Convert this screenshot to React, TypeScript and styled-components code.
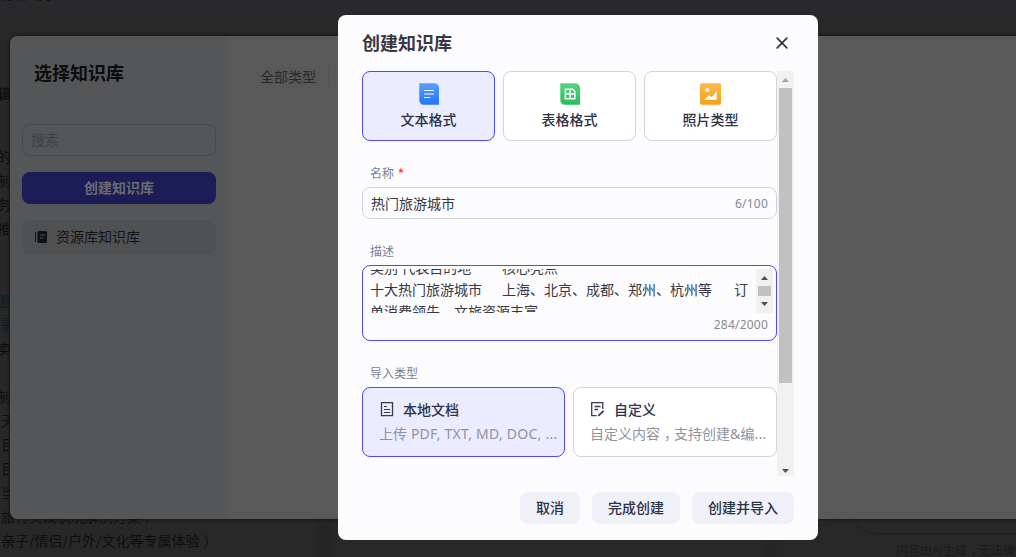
import React from "react";
import styled, { createGlobalStyle, css } from "styled-components";

const Global = createGlobalStyle`
  * { box-sizing: border-box; }
  html, body { margin: 0; height: 557px; overflow: hidden; background: #292929; }
  body { font-family: "Noto Sans CJK SC", sans-serif; font-size: 14px; color: #383743; }
`;

const Page = styled.div`
  position: relative;
  width: 1016px;
  height: 557px;
  overflow: hidden;
  background: #282828;
`;
const TopBar = styled.header`
  display: flex;
  height: 21px;
  padding-left: 1px;
  background: #29292b;
  border-bottom: 1px solid #252527;
  color: #101012;
  font-size: 14px;
  line-height: 20px;
`;
const TopText = styled.span`
  margin-top: -17px;
  width: 100px;
  white-space: nowrap;
`;
const TopPill = styled.span`
  width: 203px;
  height: 5px;
  border: 1px solid #252527;
  border-top: 0;
  border-radius: 0 0 6px 6px;
`;
const Prompt = styled.div`
  padding-top: 60px;
  width: 315px;
  line-height: 24px;
  color: #0e0e0e;
`;
const PromptLine = styled.div<{ $shift?: number; $tone?: string; $bold?: boolean }>`
  height: 24px;
  white-space: nowrap;
  text-indent: ${(p) => p.$shift ?? 1}px;
  color: ${(p) => p.$tone ?? "#0e0e0e"};
  font-weight: ${(p) => (p.$bold ? 700 : 400)};
`;
const PromptGap = styled.div<{ $h: number }>`
  height: ${(p) => p.$h}px;
`;
const Punct = styled.span`
  margin: 0 -4px 0 4px;
`;
const Splitter = styled.div`
  position: absolute;
  left: 315px;
  top: 519px;
  width: 17px;
  height: 38px;
  background: #252525;
`;
const ChatSplitter = styled(Splitter)`
  left: 766px;
  background: #262626;
`;
const ChatBox = styled.div`
  position: absolute;
  left: 852px;
  top: 480px;
  width: 240px;
  height: 54px;
  border: 1px solid #202022;
  border-radius: 24px;
`;
const ChatButton = styled(ChatBox)`
  left: 804px;
  top: 486px;
  width: 40px;
  height: 40px;
`;
const Disclaimer = styled.div`
  position: absolute;
  left: 896px;
  top: 541px;
  font-size: 12px;
  line-height: 18px;
  white-space: nowrap;
  color: #191a1d;
`;

const Picker = styled.section`
  position: absolute;
  left: 10px;
  top: 36px;
  width: 1030px;
  height: 483px;
  display: flex;
  overflow: hidden;
  border-radius: 8px;
  background: #595959;
  box-shadow: 0 0 3px 1px #161616;
`;
const Sidebar = styled.aside`
  width: 218px;
  padding: 23px 12px;
  background: #555658;
`;
const PickerTitle = styled.h2`
  margin: 0 0 39px;
  padding-left: 12px;
  font-size: 18px;
  line-height: 26px;
  font-weight: 700;
  color: #0b0c0e;
`;
const SearchBox = styled.div`
  height: 32px;
  margin-bottom: 16px;
  padding-left: 8px;
  border: 1px solid #48494d;
  border-radius: 8px;
  line-height: 29px;
  color: #3f4045;
`;
const CreateButton = styled.div`
  height: 32px;
  margin-bottom: 16px;
  border-radius: 8px;
  background: #1c1c56;
  color: #6b6b70;
  font-weight: 700;
  line-height: 31px;
  text-align: center;
`;
const LibraryItem = styled.div`
  display: flex;
  align-items: center;
  gap: 8px;
  height: 34px;
  padding-left: 12px;
  border-radius: 8px;
  background: #505153;
  color: #131417;
`;
const LibraryName = styled.span`
  margin-bottom: 2px;
`;
const PickerMain = styled.div`
  display: flex;
  align-items: flex-start;
  padding: 30px 0 0 32px;
  color: #28292d;
`;
const Filter = styled.div`
  width: 69px;
  height: 20px;
  line-height: 20px;
  border-right: 1px solid #535355;
`;

const Modal = styled.section`
  position: absolute;
  left: 338px;
  top: 15px;
  width: 480px;
  height: 525px;
  padding: 0 24px 16px;
  display: flex;
  flex-direction: column;
  border-radius: 8px;
  background: #fcfcff;
`;
const ModalHeader = styled.header`
  display: flex;
  flex: none;
  align-items: center;
  justify-content: space-between;
  height: 56px;
  padding-right: 5px;
`;
const ModalTitle = styled.h1`
  margin: 0 0 2px;
  font-size: 18px;
  line-height: 26px;
  font-weight: 700;
  color: #383743;
`;
const ScrollArea = styled.div`
  display: flex;
  flex: none;
  height: 405px;
`;
const Form = styled.div`
  width: 415px;
`;
const Cards = styled.div`
  display: flex;
  gap: 8px;
`;
const cardFrame = css<{ $active?: boolean }>`
  height: 70px;
  border: 1px solid ${(p) => (p.$active ? "#5147ff" : "#d2d3e0")};
  border-radius: 8px;
  background: ${(p) => (p.$active ? "#ebecff" : "#ffffff")};
`;
const FormatCard = styled.div<{ $active?: boolean }>`
  ${cardFrame}
  flex: 1 1 0;
  min-width: 0;
  display: flex;
  flex-direction: column;
  align-items: center;
  padding-top: 10px;
  gap: 2px;
  font-weight: 500;
  line-height: 22px;
  color: #2e3247;
`;
const ImportCard = styled.div<{ $active?: boolean; $w: number }>`
  ${cardFrame}
  flex: none;
  width: ${(p) => p.$w}px;
  padding: 10px 4px 0 16px;
`;
const ImportTitle = styled.div`
  display: flex;
  align-items: center;
  gap: 8px;
  height: 22px;
  font-weight: 500;
  color: #2e3247;
`;
const ImportText = styled.div`
  margin-top: 1px;
  height: 24px;
  line-height: 24px;
  white-space: nowrap;
  color: #92929c;
`;
const Latin = styled.span`
  font-family: "Noto Sans", sans-serif;
  line-height: 1;
  letter-spacing: 0.24px;
`;
const Label = styled.div`
  height: 46px;
  padding: 23px 8px 0;
  font-size: 12px;
  line-height: 17px;
  color: #7b7e93;
`;
const Required = styled.span`
  margin-left: 4px;
  font-weight: 700;
  color: #ff441e;
`;
const NameInput = styled.div`
  display: flex;
  align-items: center;
  justify-content: space-between;
  height: 32px;
  padding: 0 8px;
  border: 1px solid #d2d3e0;
  border-radius: 8px;
  color: #383743;
`;
const Counter = styled.span`
  font-family: "Noto Sans", sans-serif;
  font-size: 12px;
  line-height: 16px;
  letter-spacing: 0.22px;
  color: #878894;
`;
const NameCounter = styled(Counter)`
  margin-top: 2px;
`;
const DescriptionBox = styled.div`
  height: 76px;
  padding: 3px 3px 0 7px;
  border: 1px solid #5147ff;
  border-radius: 8px;
`;
const DescriptionView = styled.div`
  display: flex;
  justify-content: space-between;
  height: 44px;
  overflow: hidden;
`;
const DescriptionText = styled.div`
  margin-top: -13px;
  line-height: 22px;
  white-space: pre;
  color: #383743;
`;
const Cell = styled.span<{ $w: number }>`
  display: inline-block;
  width: ${(p) => p.$w}px;
`;
const DescriptionCount = styled.div`
  padding: 2px 5px 0 0;
  line-height: 16px;
  text-align: right;
`;
const Track = styled.div<{ $h: number }>`
  display: flex;
  flex: none;
  flex-direction: column;
  align-items: center;
  width: 17px;
  height: ${(p) => p.$h}px;
  background: #f1f1f1;
`;
const Arrow = styled.svg`
  display: block;
  flex: none;
  width: 17px;
  height: 17px;
`;
const Thumb = styled.div<{ $h: number }>`
  width: 13px;
  height: ${(p) => p.$h}px;
  margin-bottom: auto;
  background: #c1c1c1;
`;
const Footer = styled.footer`
  display: flex;
  justify-content: flex-end;
  gap: 12px;
  margin-top: auto;
`;
const Button = styled.div`
  height: 32px;
  padding: 0 16px;
  border-radius: 8px;
  background: #f0f0f8;
  color: #2e3247;
  font-weight: 500;
  line-height: 31px;
`;

interface ScrollbarProps {
  height: number;
  thumb: number;
  topColor?: string;
  downY?: number;
}

function Scrollbar({ height, thumb, topColor = "#505050", downY = 10 }: ScrollbarProps) {
  return (
    <Track $h={height}>
      <Arrow viewBox="0 0 17 17"><path d="M5 11l3.5-4 3.5 4z" fill={topColor} /></Arrow>
      <Thumb $h={thumb} />
      <Arrow viewBox="0 0 17 17"><path d={`M5 ${downY}h7l-3.5 4z`} fill="#505050" /></Arrow>
    </Track>
  );
}

const TextIcon = () => (
  <svg width="24" height="24" viewBox="0 0 24 24">
    <defs><linearGradient id="blue" x2="0" y2="1"><stop stopColor="#5a9fff" /><stop offset="1" stopColor="#2276fb" /></linearGradient></defs>
    <path d="M2.3 1.2h15.2a4.5 4.5 0 0 1 4.5 4.5v17H6.8a4.5 4.5 0 0 1-4.5-4.5z" fill="url(#blue)" />
    <path d="M7 8.5h10M7 12h10M7 15.5h6" stroke="#fff" strokeWidth="1.2" />
  </svg>
);
const TableIcon = () => (
  <svg width="24" height="24" viewBox="0 0 24 24">
    <defs><linearGradient id="green" x2="0" y2="1"><stop stopColor="#5ad37f" /><stop offset="1" stopColor="#27bd59" /></linearGradient></defs>
    <path d="M2.3 1.2h15.2a4.5 4.5 0 0 1 4.5 4.5v17H6.8a4.5 4.5 0 0 1-4.5-4.5z" fill="url(#green)" />
    <path d="M7.4 7.2h7.4l2 2v7.6H7.4zM12.1 7.2v9.6M7.4 12h9.4" fill="none" stroke="#fff" strokeWidth="1.5" />
  </svg>
);
const PhotoIcon = () => (
  <svg width="24" height="24" viewBox="0 0 24 24">
    <defs><linearGradient id="amber" x2="0" y2="1"><stop stopColor="#ffb94b" /><stop offset="1" stopColor="#f7a014" /></linearGradient></defs>
    <rect x="1" y="1.2" width="21" height="21.5" rx="1.6" fill="url(#amber)" />
    <circle cx="8.5" cy="8" r="2" fill="#fff" />
    <path d="M5.2 17.8l4.6-4.6 3 2 5-6.2v8.8z" fill="#fff" />
  </svg>
);
const DocIcon = () => (
  <svg width="16" height="16" viewBox="0 0 16 16" fill="none" stroke="#383b50" strokeWidth="1.3">
    <path d="M2.5 1.7h11v13h-11z" />
    <path d="M5 5.5h3M5 8.5h6M5 11.5h6" strokeWidth="1.1" />
  </svg>
);
const EditIcon = () => (
  <svg width="16" height="16" viewBox="0 0 16 16" fill="none" stroke="#383b50" strokeWidth="1.3">
    <path d="M6.5 14.7H1.7v-13h11.1V8M4.5 5.5h6M4.5 8.5h3.5" />
    <path d="M8.2 14.9l5.4-5" strokeWidth="1.9" />
  </svg>
);
const LibraryIcon = () => (
  <svg width="14" height="14" viewBox="0 0 14 14">
    <path d="M1.5 2v10" stroke="#111216" strokeWidth="1" />
    <rect x="3.5" y="1" width="9.5" height="12" rx="1.5" fill="#111216" />
    <path d="M6 5h5M6 8h3.5" stroke="#505153" strokeWidth="1.2" />
  </svg>
);
const CloseIcon = () => (
  <svg width="14" height="14" viewBox="0 0 14 14" stroke="#383743" strokeWidth="1.8" strokeLinecap="round">
    <path d="M2.2 2.2l9.6 9.6M11.8 2.2l-9.6 9.6" />
  </svg>
);

export default function App() {
  return (
    <Page>
      <Global />
      <TopBar>
        <TopText>分析助手</TopText>
        <TopPill />
      </TopBar>
      <Prompt>
        <PromptLine $shift={-3} $bold>辑</PromptLine>
        <PromptGap $h={39} />
        <PromptLine $shift={-3}>的</PromptLine>
        <PromptLine $shift={-3}>制</PromptLine>
        <PromptLine $shift={-3}>务</PromptLine>
        <PromptLine $shift={-3}>推</PromptLine>
        <PromptGap $h={48} />
        <PromptLine $shift={-3} $tone="#0d1c1f">游</PromptLine>
        <PromptLine $tone="#0d1c1f">需</PromptLine>
        <PromptLine $shift={-3}>卖</PromptLine>
        <PromptGap $h={24} />
        <PromptLine $shift={-3}>制</PromptLine>
        <PromptLine>天</PromptLine>
        <PromptLine>目</PromptLine>
        <PromptLine>目</PromptLine>
        <PromptLine>当</PromptLine>
        <PromptLine>旅行突发状况解决方案<Punct>）</Punct></PromptLine>
        <PromptLine>亲子/情侣/户外/文化等专属体验<Punct>）</Punct></PromptLine>
      </Prompt>
      <Splitter />
      <ChatSplitter />
      <ChatBox />
      <ChatButton />
      <Disclaimer>内容由AI生成<Punct>，</Punct>无法确保</Disclaimer>

      <Picker>
        <Sidebar>
          <PickerTitle>选择知识库</PickerTitle>
          <SearchBox>搜索</SearchBox>
          <CreateButton>创建知识库</CreateButton>
          <LibraryItem><LibraryIcon /><LibraryName>资源库知识库</LibraryName></LibraryItem>
        </Sidebar>
        <PickerMain><Filter>全部类型</Filter></PickerMain>
      </Picker>

      <Modal>
        <ModalHeader>
          <ModalTitle>创建知识库</ModalTitle>
          <CloseIcon />
        </ModalHeader>
        <ScrollArea>
          <Form>
            <Cards>
              <FormatCard $active><TextIcon />文本格式</FormatCard>
              <FormatCard><TableIcon />表格格式</FormatCard>
              <FormatCard><PhotoIcon />照片类型</FormatCard>
            </Cards>
            <Label>名称<Required>*</Required></Label>
            <NameInput>热门旅游城市<NameCounter>6/100</NameCounter></NameInput>
            <Label>描述</Label>
            <DescriptionBox>
              <DescriptionView>
                <DescriptionText>
                  <div><Cell $w={132}>类别 代表目的地</Cell>核心亮点</div>
                  <div><Cell $w={132}>十大热门旅游城市</Cell><Cell $w={232}>上海、北京、成都、郑州、杭州等</Cell>订</div>
                  <div>单消费领先<Punct>，</Punct>文旅资源丰富</div>
                </DescriptionText>
                <Scrollbar height={44} thumb={10} downY={6} />
              </DescriptionView>
              <DescriptionCount><Counter>284/2000</Counter></DescriptionCount>
            </DescriptionBox>
            <Label>导入类型</Label>
            <Cards>
              <ImportCard $active $w={203}>
                <ImportTitle><DocIcon />本地文档</ImportTitle>
                <ImportText>上传<Latin> PDF, TXT, MD, DOC, ...</Latin></ImportText>
              </ImportCard>
              <ImportCard $w={204}>
                <ImportTitle><EditIcon />自定义</ImportTitle>
                <ImportText>自定义内容<Punct>，</Punct>支持创建<Latin>&amp;</Latin>编<Latin>...</Latin></ImportText>
              </ImportCard>
            </Cards>
          </Form>
          <Scrollbar height={405} thumb={295} topColor="#a3a3a3" />
        </ScrollArea>
        <Footer>
          <Button>取消</Button>
          <Button>完成创建</Button>
          <Button>创建并导入</Button>
        </Footer>
      </Modal>
    </Page>
  );
}
